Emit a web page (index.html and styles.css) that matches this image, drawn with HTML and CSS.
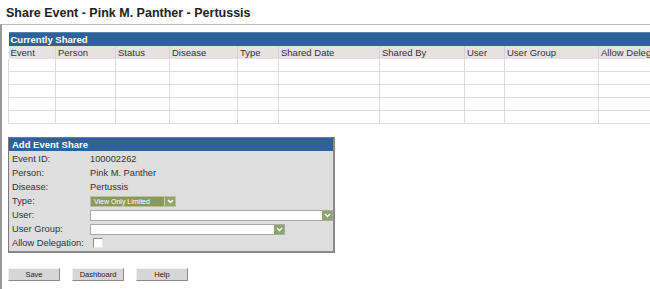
FILE: index.html
```html
<!DOCTYPE html>
<html>
<head>
<meta charset="utf-8">
<link rel="stylesheet" href="styles.css">
</head>
<body>
<h1 class="title">Share Event - Pink M. Panther - Pertussis</h1>
<div class="content">
  <div class="grid-wrap">
  <table class="grid">
    <colgroup>
      <col style="width:47px"><col style="width:60px"><col style="width:54px"><col style="width:68px"><col style="width:41px"><col style="width:101px"><col style="width:85px"><col style="width:40px"><col style="width:94px"><col style="width:110px">
    </colgroup>
    <thead>
      <tr><th class="bar" colspan="10">Currently Shared</th></tr>
      <tr class="heads"><th>Event</th><th>Person</th><th>Status</th><th>Disease</th><th>Type</th><th>Shared Date</th><th>Shared By</th><th>User</th><th>User Group</th><th>Allow Delegation</th></tr>
    </thead>
    <tbody>
      <tr><td></td><td></td><td></td><td></td><td></td><td></td><td></td><td></td><td></td><td></td></tr>
      <tr><td></td><td></td><td></td><td></td><td></td><td></td><td></td><td></td><td></td><td></td></tr>
      <tr><td></td><td></td><td></td><td></td><td></td><td></td><td></td><td></td><td></td><td></td></tr>
      <tr><td></td><td></td><td></td><td></td><td></td><td></td><td></td><td></td><td></td><td></td></tr>
      <tr><td></td><td></td><td></td><td></td><td></td><td></td><td></td><td></td><td></td><td></td></tr>
    </tbody>
  </table>
  </div>

  <div class="panel">
    <div class="panel-head">Add Event Share</div>
    <div class="panel-body">
      <div class="row"><span class="label">Event ID:</span><span class="value">100002262</span></div>
      <div class="row"><span class="label">Person:</span><span class="value">Pink M. Panther</span></div>
      <div class="row"><span class="label">Disease:</span><span class="value">Pertussis</span></div>
      <div class="row"><span class="label">Type:</span>
        <span class="select select-type"><span class="sel-text">View Only Limited</span><span class="arrow"><svg width="7" height="5" viewBox="0 0 7 5"><path d="M1 1 L3.5 3.5 L6 1" fill="none" stroke="#fff" stroke-width="1.4"/></svg></span></span>
      </div>
      <div class="row"><span class="label">User:</span>
        <span class="select select-user"><span class="sel-text"></span><span class="arrow"><svg width="7" height="5" viewBox="0 0 7 5"><path d="M1 1 L3.5 3.5 L6 1" fill="none" stroke="#fff" stroke-width="1.4"/></svg></span></span>
      </div>
      <div class="row"><span class="label">User Group:</span>
        <span class="select select-group"><span class="sel-text"></span><span class="arrow"><svg width="7" height="5" viewBox="0 0 7 5"><path d="M1 1 L3.5 3.5 L6 1" fill="none" stroke="#fff" stroke-width="1.4"/></svg></span></span>
      </div>
      <div class="row"><span class="label label-wide">Allow Delegation:</span><span class="checkbox"></span></div>
    </div>
  </div>

  <div class="buttons">
    <button class="btn">Save</button>
    <button class="btn">Dashboard</button>
    <button class="btn">Help</button>
  </div>
</div>
</body>
</html>
```
FILE: styles.css
```css
html, body {
  margin: 0;
  padding: 0;
  background: #fff;
  overflow: hidden;
  font-family: "Liberation Sans", Arial, sans-serif;
  color: #222;
}
.title {
  margin: 0;
  height: 24px;
  box-sizing: border-box;
  padding: 6px 0 0 6px;
  font-size: 12.5px;
  font-weight: bold;
  line-height: 14px;
  color: #222;
  white-space: nowrap;
}
.content {
  border-top: 1px solid #bcbcbc;
  border-left: 2px solid #9a9a9a;
  height: 270px;
  padding: 7px 0 0 6px;
  box-sizing: border-box;
}
.grid-wrap {
  overflow: hidden;
}
.grid {
  border-collapse: collapse;
  table-layout: fixed;
  width: 700px;
  font-size: 9.5px;
}
.grid th.bar {
  background: #2e6299;
  color: #fff;
  text-align: left;
  font-weight: bold;
  height: 13px;
  padding: 0 0 0 2px;
  line-height: 13px;
  border: 0;
  border-top: 1px solid #5a82b0;
}
.grid .heads th {
  background: #e6e2e2;
  font-weight: normal;
  text-align: left;
  color: #333;
  height: 13px;
  line-height: 13px;
  padding: 0 0 0 2px;
  border-left: 1px solid #d6d2d2;
  white-space: nowrap;
  overflow: hidden;
}
.grid .heads th:first-child { border-left: 0; }
.grid td {
  height: 12px;
  padding: 0;
  border: 1px solid #dcdcdc;
  border-top: 0;
}
.panel {
  margin-top: 13px;
  width: 327px;
  border: 1px solid #7a7a7a;
  border-right: 2px solid #8a8a8a;
  border-bottom: 2px solid #8a8a8a;
  box-sizing: border-box;
  font-size: 9.3px;
  color: #333;
}
.panel-head {
  background: #2e6299;
  color: #fff;
  font-weight: bold;
  height: 13px;
  line-height: 13px;
  padding-left: 3px;
  font-size: 9.5px;
}
.panel-body {
  background: #dedede;
  padding: 1px 0 1px 3px;
}
.row {
  display: flex;
  align-items: center;
  height: 14px;
}
.label {
  width: 78px;
  flex: none;
}
.value { color: #333; }
.select {
  display: flex;
  align-items: stretch;
  height: 11px;
  box-sizing: border-box;
  border: 1px solid #a9a9a9;
  background: #fff;
}
.sel-text {
  flex: 1;
  font-size: 7px;
  line-height: 9px;
  color: #fff;
  padding-left: 3px;
}
.arrow {
  width: 10px;
  flex: none;
  background: #8fa36a;
  display: flex;
  align-items: center;
  justify-content: center;
}
.select-type {
  width: 86px;
  background: #8a9a5c;
  border-color: #b8c39a;
}
.select-type .arrow {
  border-left: 1px solid #c7d0a8;
}
.select-user { width: 244px; }
.select-group { width: 195px; }
.checkbox {
  width: 8px;
  height: 8px;
  background: #fff;
  border: 1px solid #8a8a8a;
  border-right-color: #e8e8e8;
  border-bottom-color: #e8e8e8;
  margin-left: 3px;
}
.buttons {
  display: flex;
  gap: 12px;
  margin-top: 15px;
}
.btn {
  width: 52px;
  height: 13px;
  padding: 0;
  font-family: "Liberation Sans", Arial, sans-serif;
  font-size: 7.5px;
  color: #222;
  background: #d6d6d6;
  border: 1px solid #8a8a8a;
  border-top-color: #f2f2f2;
  border-left-color: #f2f2f2;
}
```
